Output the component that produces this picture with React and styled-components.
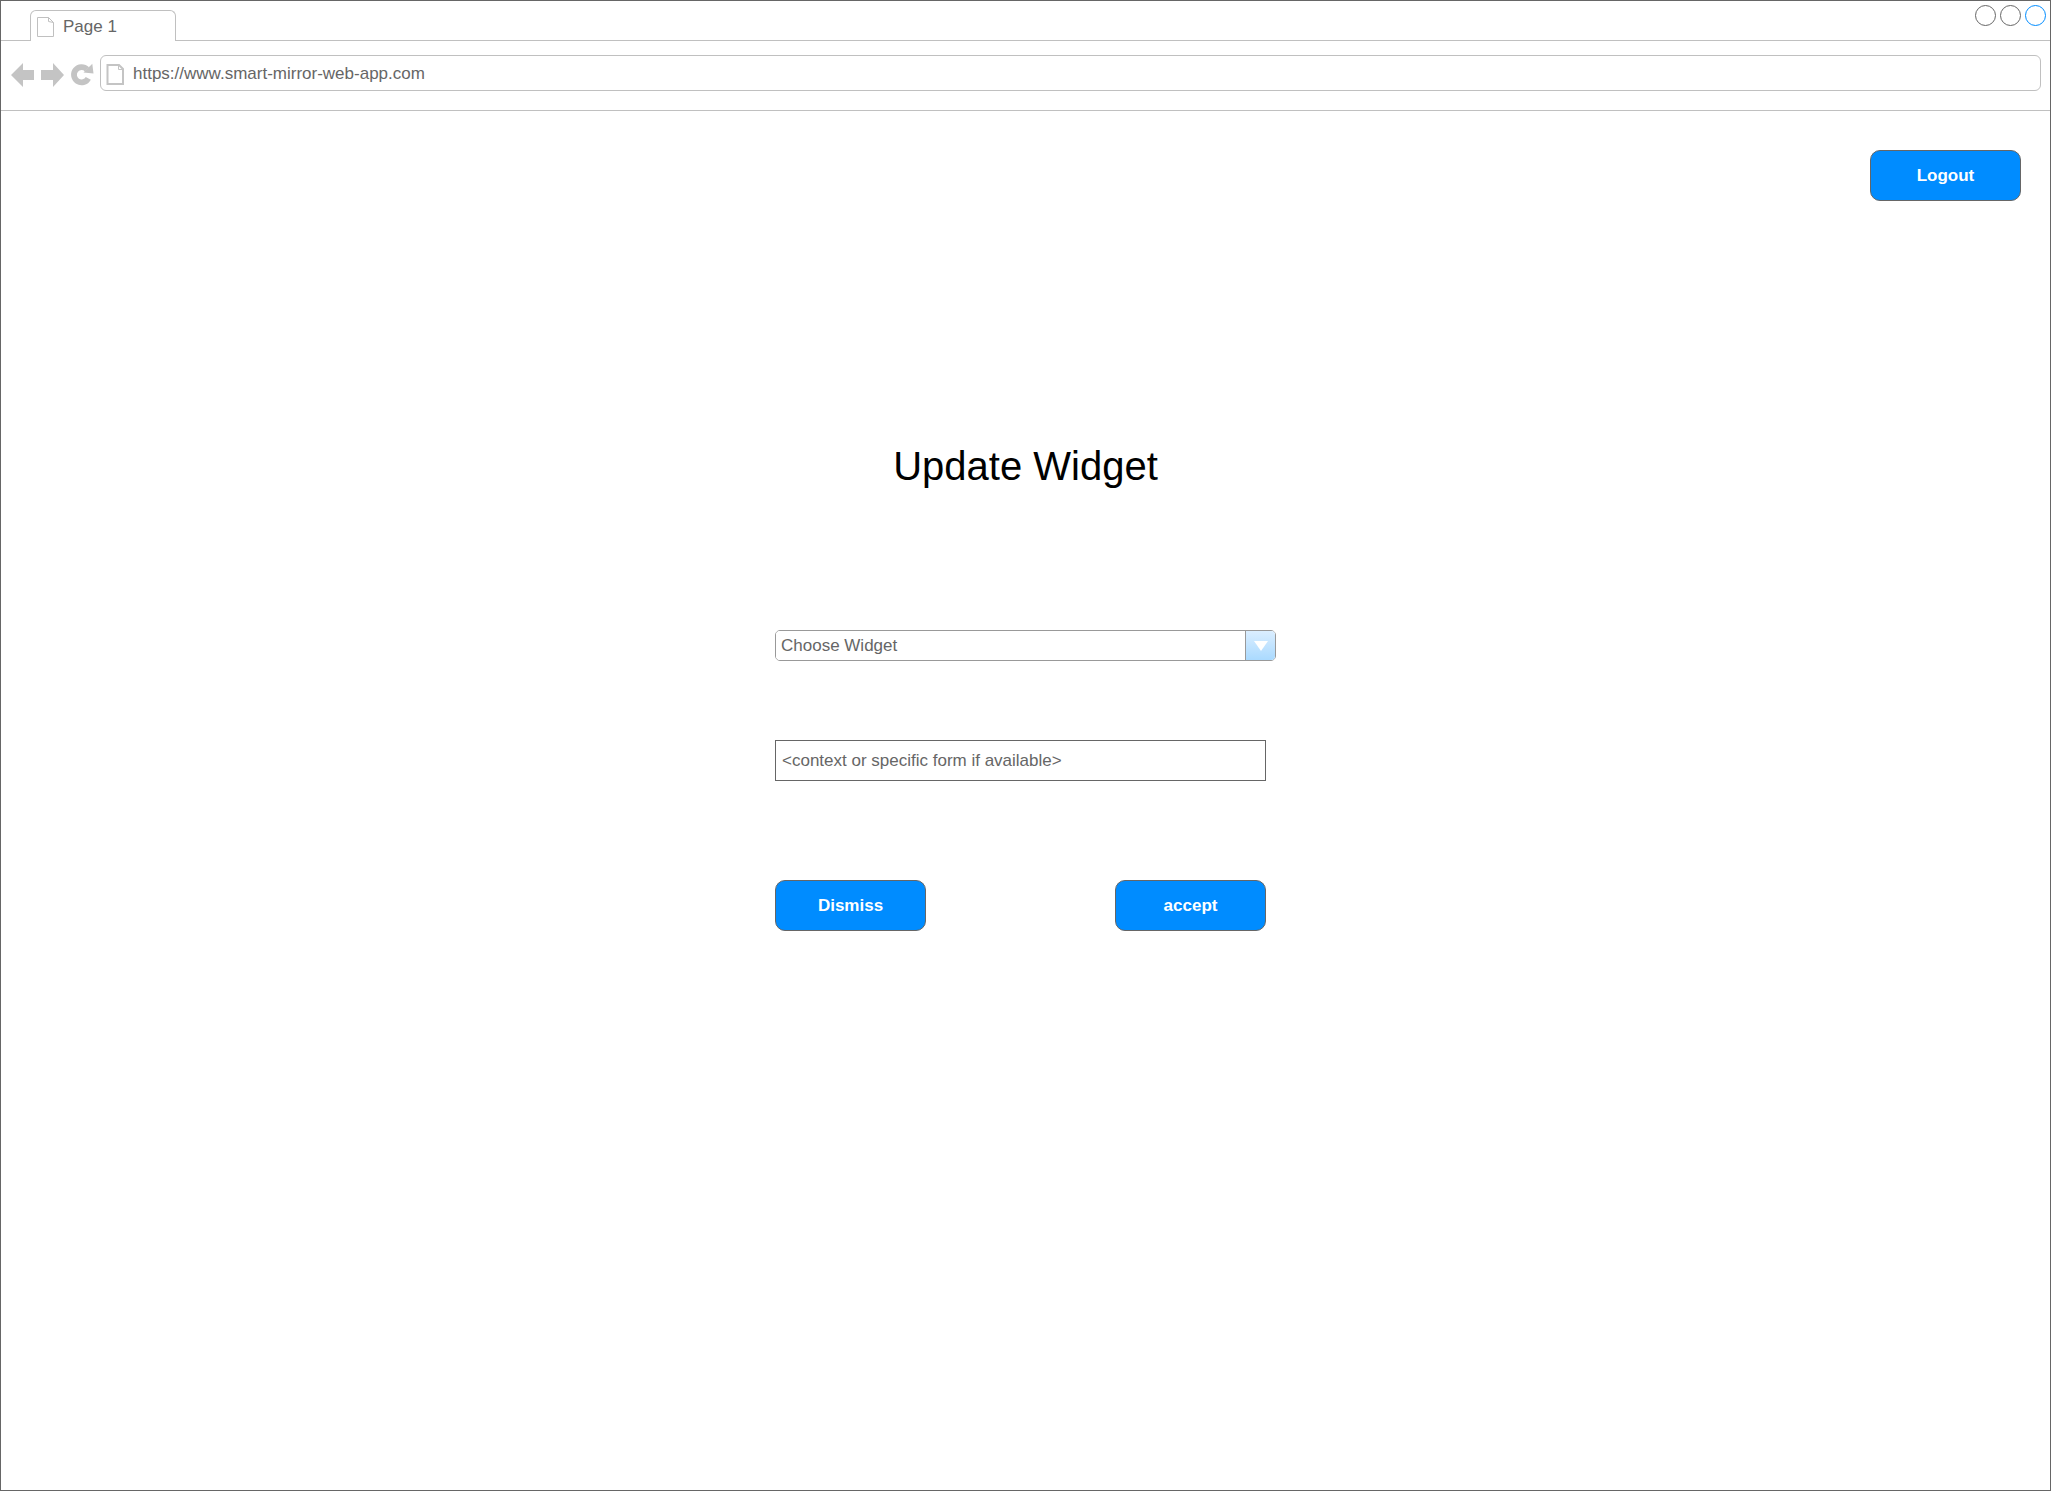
import React from "react";
import styled, { createGlobalStyle } from "styled-components";

const GlobalStyle = createGlobalStyle`
  *, *::before, *::after { box-sizing: border-box; }
  body { margin: 0; background: #fff; }
  body, button, input, select {
    font-family: "Liberation Sans", Arial, Helvetica, sans-serif;
    font-size: 17px;
    line-height: 20px;
  }
`;

const Window = styled.div`
  display: flex;
  flex-direction: column;
  min-height: 100vh;
  border: 1px solid #666;
  color: #666;
`;

const TabStrip = styled.header`
  display: flex;
  justify-content: space-between;
  align-items: flex-start;
  height: 40px;
  padding: 0 4px 0 29px;
  border-bottom: 1px solid #c0c0c0;
`;

const Tab = styled.button`
  display: flex;
  align-items: center;
  gap: 9px;
  align-self: flex-end;
  width: 146px;
  height: 31px;
  margin-bottom: -1px;
  padding: 2px 6px 0;
  border: 1px solid #c0c0c0;
  border-bottom: 0;
  border-radius: 6px 6px 0 0;
  background: #fff;
  color: inherit;
`;

const WindowControls = styled.div`
  display: flex;
  gap: 4px;
  padding-top: 4px;
`;

const Circle = styled.button`
  width: 21px;
  height: 21px;
  padding: 0;
  border: 1px solid ${(p) => p.$color};
  border-radius: 50%;
  background: #fff;
`;

const Toolbar = styled.nav`
  display: flex;
  align-items: flex-start;
  gap: 6px;
  height: 70px;
  padding: 14px 9px 0;
  border-bottom: 1px solid #c0c0c0;
`;

const IconButton = styled.button`
  display: flex;
  align-items: center;
  justify-content: center;
  width: 24px;
  height: 40px;
  padding: 0;
  border: 0;
  background: none;
`;

const AddressBar = styled.label`
  display: flex;
  flex: 1;
  align-items: center;
  gap: 8px;
  height: 36px;
  padding: 2px 5px 0;
  border: 1px solid #c0c0c0;
  border-radius: 6px;
`;

const AddressInput = styled.input`
  flex: 1;
  min-width: 0;
  padding: 0;
  border: 0;
  outline: 0;
  background: none;
  color: #666;
`;

const Content = styled.main`
  display: flex;
  flex-direction: column;
  align-items: center;
  padding: 39px 29px;
`;

const ActionButton = styled.button`
  width: 151px;
  height: 51px;
  border: 1px solid #666;
  border-radius: 10px;
  background: #008cff;
  color: #fff;
  font-weight: 700;
`;

const LogoutButton = styled(ActionButton)`
  align-self: flex-end;
`;

const Title = styled.h1`
  margin: 241px 0 140px;
  color: #000;
  font-size: 40px;
  font-weight: 400;
  line-height: 48px;
`;

const Form = styled.form`
  display: flex;
  flex-direction: column;
  width: 100%;
  max-width: 501px;
`;

const SelectBox = styled.div`
  display: grid;
  grid-template-columns: 1fr 30px;
  height: 31px;
  border: 1px solid #999;
  border-radius: 5px;
  overflow: hidden;
`;

const Select = styled.select`
  grid-area: 1 / 1 / 2 / 3;
  appearance: none;
  padding: 1px 36px 0 5px;
  border: 0;
  outline: 0;
  background: #fff;
  color: #666;
`;

const SelectArrow = styled.span`
  grid-area: 1 / 2;
  z-index: 1;
  display: flex;
  align-items: center;
  justify-content: center;
  border-left: 1px solid #999;
  background: linear-gradient(#dbeeff, #aadaff);
  pointer-events: none;
`;

const Lower = styled.div`
  display: flex;
  flex-direction: column;
  gap: 99px;
  padding: 79px 10px 0 0;
`;

const ContextInput = styled.input`
  width: 100%;
  height: 41px;
  padding: 0 6px;
  border: 1px solid #666;
  border-radius: 0;
  background: #fff;
  color: #666;
`;

const Actions = styled.div`
  display: flex;
  justify-content: space-between;
`;

function TabPageIcon() {
  return (
    <svg width="17" height="20" viewBox="0 0 17 20" fill="none" stroke="#c0c0c0" aria-hidden="true">
      <path d="M.5 .5H11.5L16.500 5.500V19.500H.5ZM11.500 .5V4.500L16.500 5.500" />
    </svg>
  );
}

function AddressPageIcon() {
  return (
    <svg width="19" height="21" viewBox="0 0 19 21" fill="none" stroke="#c4c4c4" aria-hidden="true">
      <path d="M1.500 1H13L17 5V20H1.500Z" strokeWidth="2" />
      <path d="M12.500 1V5.500H17" />
    </svg>
  );
}

function ArrowIcon({ right }) {
  return (
    <svg width="24" height="24" viewBox="0 0 24 24" fill="#c4c4c4" aria-hidden="true">
      <path d={right ? "M24 12L13 0V7H1V17H13V24Z" : "M1 12L13 0V7H24V17H13V24Z"} />
    </svg>
  );
}

function ReloadIcon() {
  return (
    <svg width="24" height="24" viewBox="0 0 24 24" aria-hidden="true">
      <path d="M18.300 15.300A7.600 7.600 0 1 1 17 6.400" fill="none" stroke="#c4c4c4" strokeWidth="5.800" />
      <path d="M22.300 .8L23.500 10.500L13.500 9.500Z" fill="#c4c4c4" />
    </svg>
  );
}

export default function App() {
  return (
    <>
      <GlobalStyle />
      <Window>
        <TabStrip>
          <Tab type="button">
            <TabPageIcon />
            Page 1
          </Tab>
          <WindowControls>
            <Circle type="button" aria-label="Minimize" $color="#666" />
            <Circle type="button" aria-label="Maximize" $color="#666" />
            <Circle type="button" aria-label="Close" $color="#008cff" />
          </WindowControls>
        </TabStrip>
        <Toolbar>
          <IconButton type="button" aria-label="Back"><ArrowIcon /></IconButton>
          <IconButton type="button" aria-label="Forward"><ArrowIcon right /></IconButton>
          <IconButton type="button" aria-label="Reload"><ReloadIcon /></IconButton>
          <AddressBar>
            <AddressPageIcon />
            <AddressInput type="text" aria-label="Address" defaultValue="https://www.smart-mirror-web-app.com" />
          </AddressBar>
        </Toolbar>
        <Content>
          <LogoutButton type="button">Logout</LogoutButton>
          <Title>Update Widget</Title>
          <Form onSubmit={(e) => e.preventDefault()}>
            <SelectBox>
              <Select aria-label="Widget" defaultValue="">
                <option value="">Choose Widget</option>
              </Select>
              <SelectArrow>
                <svg width="14" height="10" viewBox="0 0 14 10" aria-hidden="true">
                  <path d="M0 0H14L7 10Z" fill="#fff" />
                </svg>
              </SelectArrow>
            </SelectBox>
            <Lower>
              <ContextInput type="text" aria-label="Context" defaultValue="<context or specific form if available>" />
              <Actions>
                <ActionButton type="button">Dismiss</ActionButton>
                <ActionButton type="submit">accept</ActionButton>
              </Actions>
            </Lower>
          </Form>
        </Content>
      </Window>
    </>
  );
}
